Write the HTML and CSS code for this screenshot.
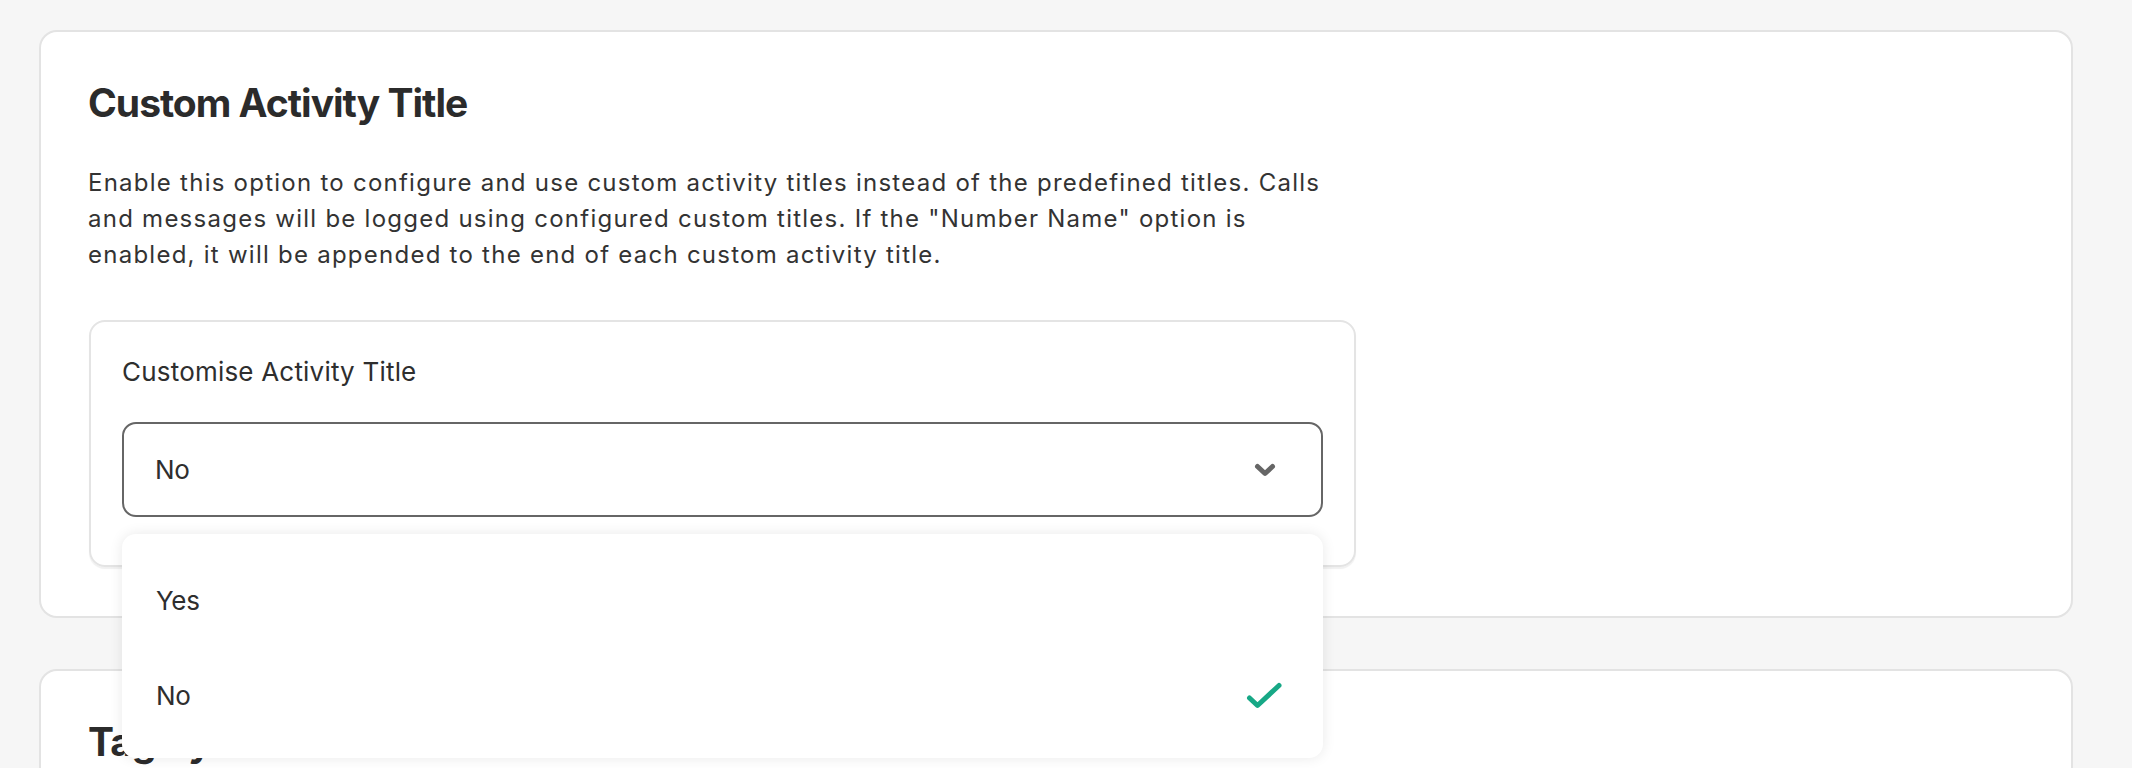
FILE: index.html
```html
<!DOCTYPE html>
<html lang="en">
<head>
<meta charset="utf-8">
<title>Settings</title>
<link rel="stylesheet" href="styles.css">
</head>
<body>
<main class="page">
  <section class="card">
    <h2 class="card-title">Custom Activity Title</h2>
    <p class="card-desc">Enable this option to configure and use custom activity titles instead of the predefined titles. Calls and messages will be logged using configured custom titles. If the "Number Name" option is enabled, it will be appended to the end of each custom activity title.</p>
    <div class="field-box">
      <div class="field-label">Customise Activity Title</div>
      <div class="select-wrap">
        <div class="select">
          <span class="select-value">No</span>
          <svg class="chevron" width="22" height="14" viewBox="0 0 22 14"><path d="M3.5 3.5 L11 10.5 L18.5 3.5" fill="none" stroke="#666" stroke-width="5" stroke-linecap="round" stroke-linejoin="round"/></svg>
        </div>
        <ul class="menu">
          <li class="menu-item">Yes</li>
          <li class="menu-item">No
            <svg class="check" width="36" height="27" viewBox="0 0 36 27"><path d="M3.5 16 L11.5 23.5 L33 3.5" fill="none" stroke="#17a886" stroke-width="5" stroke-linecap="round" stroke-linejoin="round"/></svg>
          </li>
        </ul>
      </div>
    </div>
  </section>
  <section class="card">
    <h2 class="card-title">Tag Sync</h2>
  </section>
</main>
</body>
</html>
```
FILE: styles.css
```css
* { box-sizing: border-box; }
html, body { margin: 0; padding: 0; }
body {
  background: #f6f6f6;
  font-family: Inter, "Noto Sans", sans-serif;
  color: #2e2e2e;
  overflow: hidden;
  height: 768px;
}
.page {
  padding: 30px 59px 0 39px;
  display: flex;
  flex-direction: column;
  gap: 51px;
}
.card {
  background: #fff;
  border: 2px solid #e3e3e3;
  border-radius: 18px;
  padding: 47px 48px 49px 47px;
}
.card-title {
  margin: 0;
  font-size: 39px;
  line-height: 48px;
  font-weight: 700;
  letter-spacing: -1px;
  color: #2b2b2b;
}
.card-desc {
  margin: 38px 0 0;
  max-width: 1250px;
  font-size: 24px;
  line-height: 36px;
  letter-spacing: 1.25px;
  color: #333;
}
.field-box {
  margin: 47px 0 0 1px;
  width: 1267px;
  border: 2px solid #e4e4e4;
  border-radius: 16px;
  padding: 33px 31px 48px;
  box-shadow: 0 2px 1px rgba(0, 0, 0, 0.06);
}
.field-label {
  font-size: 26px;
  line-height: 34px;
  letter-spacing: 0.2px;
  color: #2e2e2e;
}
.select-wrap {
  position: relative;
  margin-top: 33px;
}
.select {
  height: 95px;
  border: 2px solid #666;
  border-radius: 14px;
  padding: 0 45px 0 31px;
  display: flex;
  align-items: center;
  justify-content: space-between;
  font-size: 26px;
  letter-spacing: -0.3px;
  background: #fff;
}
.menu {
  position: absolute;
  left: 0;
  right: 0;
  top: 112px;
  margin: 0;
  padding: 19px 0 15px;
  list-style: none;
  background: #fff;
  border-radius: 14px;
  box-shadow: 0 0 14px rgba(0, 0, 0, 0.09);
  z-index: 2;
}
.menu-item {
  height: 95px;
  padding: 0 41px 0 34px;
  display: flex;
  align-items: center;
  justify-content: space-between;
  font-size: 26px;
  letter-spacing: -0.3px;
}
.check { display: block; }
.chevron { display: block; }
```
